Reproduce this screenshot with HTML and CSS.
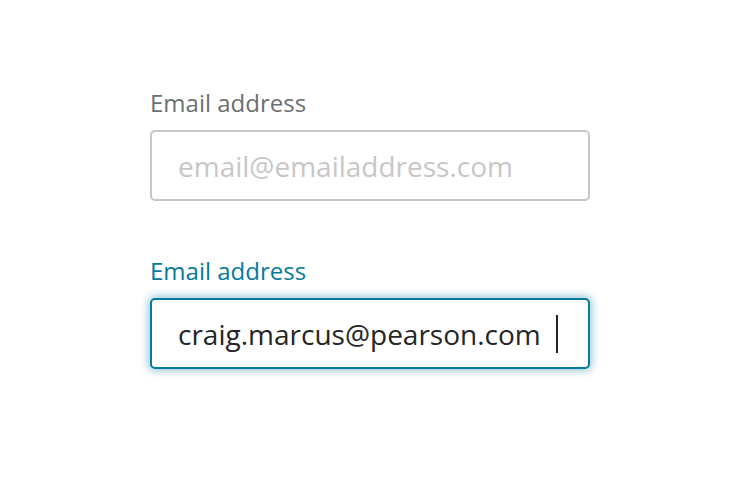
FILE: index.html
```html
<!DOCTYPE html>
<html>
<head>
<meta charset="utf-8">
<link rel="stylesheet" href="styles.css">
</head>
<body>
<main class="form">
  <div class="field">
    <label class="label">Email address</label>
    <div class="input">
      <span class="placeholder">email@emailaddress.com</span>
    </div>
  </div>
  <div class="field field-focus">
    <label class="label">Email address</label>
    <div class="input">
      <span class="value">craig.marcus@pearson.com</span><span class="caret"></span>
    </div>
  </div>
</main>
</body>
</html>
```

FILE: styles.css
```css
html, body {
  margin: 0;
  padding: 0;
  background: #ffffff;
}
body {
  font-family: "Open Sans", "Noto Sans", sans-serif;
  width: 740px;
  height: 490px;
}
.form {
  padding: 87px 0 0 150px;
  display: flex;
  flex-direction: column;
  gap: 54px;
}
.field {
  display: flex;
  flex-direction: column;
  width: 440px;
}
.label {
  font-size: 24px;
  line-height: 32px;
  color: #6a7070;
  margin-bottom: 11px;
}
.input {
  box-sizing: border-box;
  height: 71px;
  border: 2px solid #c7c7c7;
  border-radius: 5px;
  padding: 0 0 0 26px;
  display: flex;
  align-items: center;
  font-size: 28px;
  background: #fff;
}
.placeholder {
  color: #c7c7c7;
}
.field-focus .label {
  color: #047a9c;
}
.field-focus .input {
  border-color: #047a9c;
  box-shadow: 0 0 8px 2px rgba(4, 122, 156, 0.4);
}
.value {
  color: #252525;
}
.caret {
  width: 2px;
  height: 38px;
  background: #222;
  margin-left: 15px;
}
```
